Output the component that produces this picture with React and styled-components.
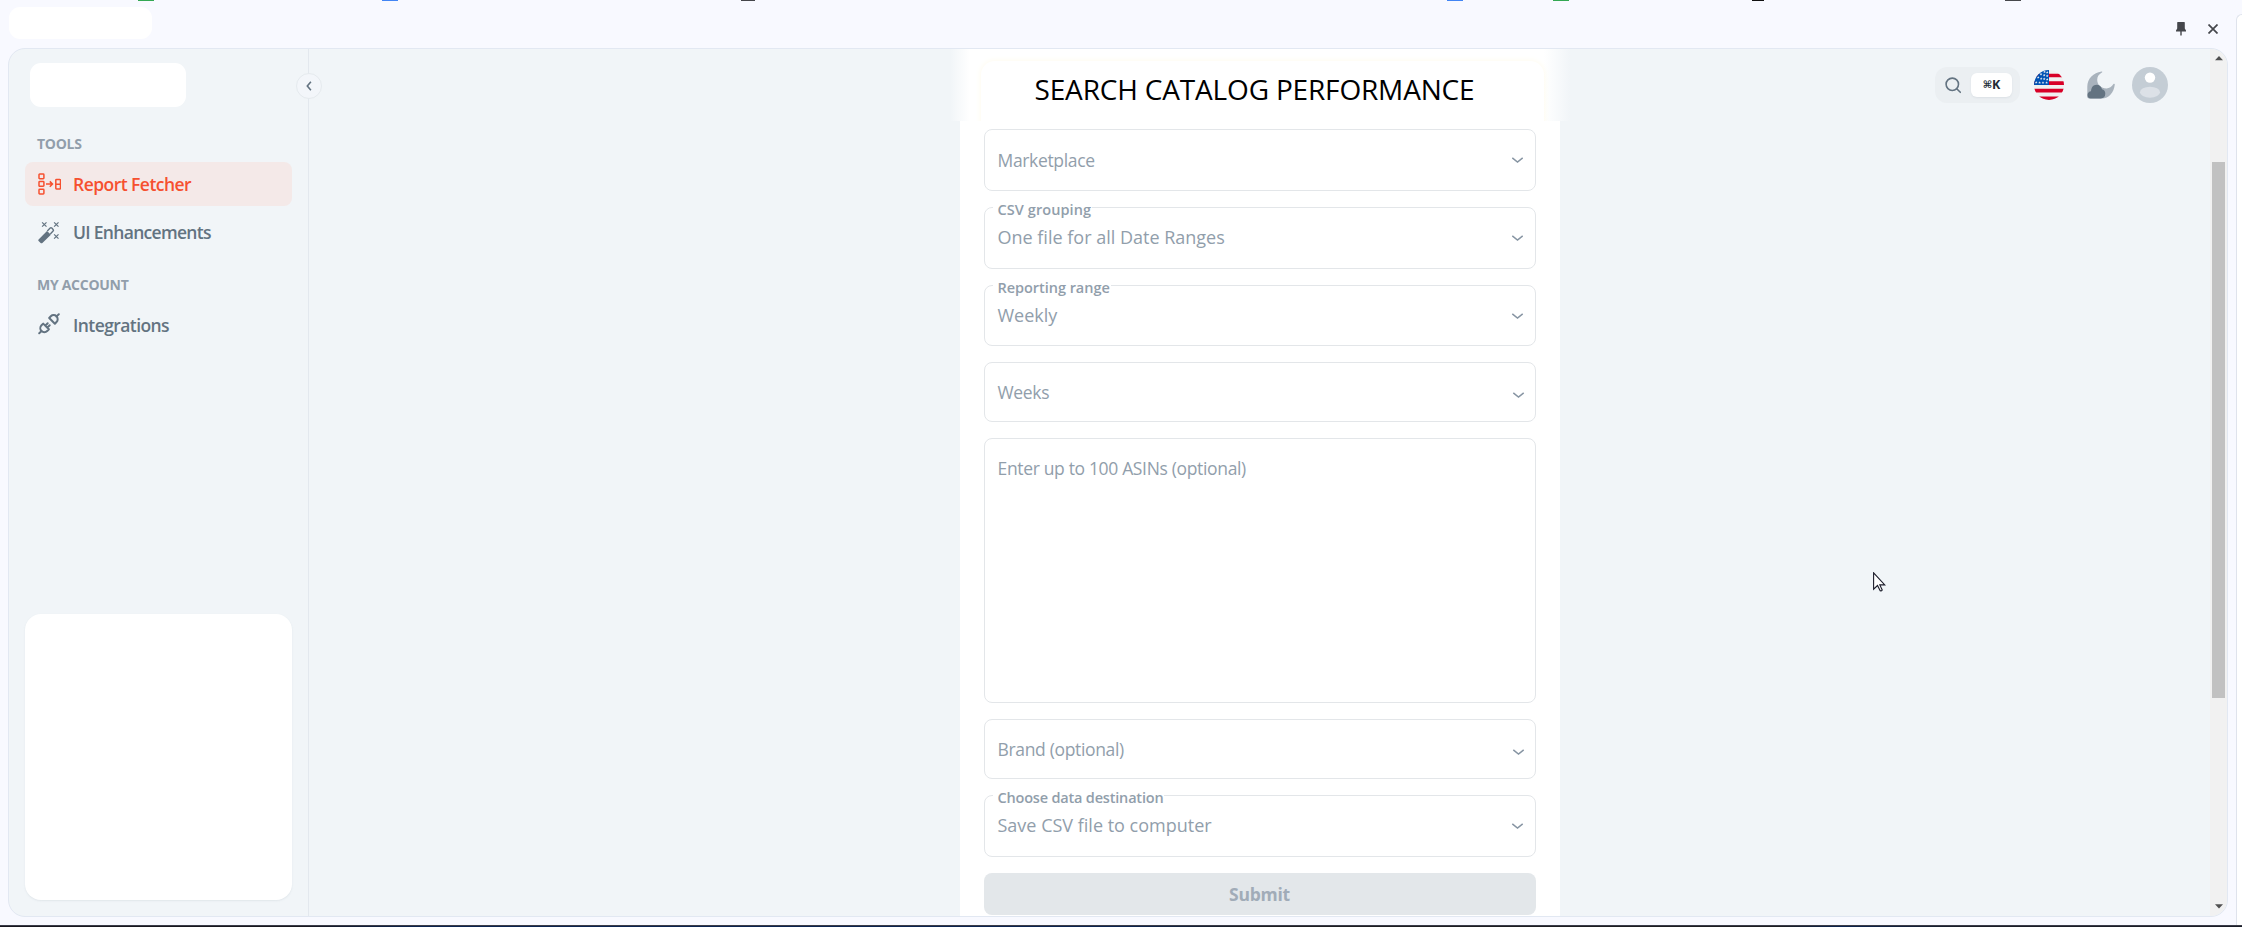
import React from 'react';
import styled, { createGlobalStyle } from 'styled-components';

const GlobalStyle = createGlobalStyle`
  *, *::before, *::after { box-sizing: border-box; }
  body {
    margin: 0;
    overflow: hidden;
    background: #f8f9ff;
    font-family: "Open Sans", "Noto Sans", sans-serif;
  }
`;

const Screen = styled.div`
  display: flex;
  flex-direction: column;
  width: 2242px;
  height: 927px;
  background: #f8f9ff;
`;

const TabStrip = styled.div`
  display: flex;
  flex: none;
  height: 1px;
`;

const TabEdge = styled.span`
  width: ${(p) => p.$width}px;
  margin-left: ${(p) => p.$gap}px;
  background: ${(p) => p.$color};
`;

const Workspace = styled.div`
  flex: 1;
  display: flex;
  min-height: 0;
`;

const SidePanel = styled.section`
  flex: 1;
  display: flex;
  flex-direction: column;
  padding: 0 8px;
`;

const PanelBar = styled.header`
  flex: none;
  display: flex;
  align-items: flex-start;
  justify-content: space-between;
  height: 47px;
  padding: 6px 10px 0 1px;
`;

const PanelTitle = styled.div`
  width: 143px;
  height: 32px;
  border-radius: 11px;
  background: #fff;
`;

const PanelActions = styled.div`
  display: flex;
  align-items: center;
  gap: 22px;
  padding-top: 15px;
`;

const NextPanel = styled.aside`
  width: 6px;
  margin-top: 13px;
  border: solid #dfe3ec;
  border-width: 1px 0 0 1px;
  border-radius: 9px 0 0 0;
  background: #fff;
`;

const Frame = styled.div`
  display: flex;
  height: 869px;
  border: 1px solid #e2e8f2;
  border-radius: 17px;
  background: #f1f5f8;
  overflow: hidden;
`;

const Sidebar = styled.nav`
  position: relative;
  display: flex;
  flex-direction: column;
  width: 300px;
  padding: 14px 16px 16px;
  border-right: 1px solid #e3e8ee;
  flex: none;
`;

const Logo = styled.div`
  width: 156px;
  height: 44px;
  margin: 0 0 6px 5px;
  border-radius: 11px;
  background: #fff;
`;

const CollapseButton = styled.button`
  position: absolute;
  z-index: 2;
  top: 24px;
  right: -14px;
  display: grid;
  place-items: center;
  width: 26px;
  height: 26px;
  padding: 0;
  border: 1px solid #e5eaee;
  border-radius: 50%;
  background: #f3f6fa;
  color: #637381;
`;

const SectionLabel = styled.h2`
  margin: 21px 0 8px 12px;
  color: #919eab;
  font-size: 14px;
  font-weight: 700;
  line-height: 20px;
  letter-spacing: -0.28px;
`;

const NavList = styled.div`
  display: flex;
  flex-direction: column;
  gap: 4px;
`;

const NavItem = styled.a`
  display: flex;
  align-items: center;
  gap: 12px;
  height: 44px;
  padding: 0 12px;
  border-radius: 8px;
  background: ${(p) => (p.$active ? '#f4e9e8' : 'transparent')};
  color: ${(p) => (p.$active ? '#f6502f' : '#637381')};
  font-size: 17.5px;
  font-weight: 600;
  letter-spacing: ${(p) => p.$tracking}px;
  white-space: nowrap;
`;

const PromoCard = styled.div`
  width: 267px;
  height: 286px;
  margin-top: auto;
  border-radius: 16px;
  background: #fff;
  box-shadow: 0 1px 2px rgba(145, 158, 171, 0.16);
`;

const Main = styled.main`
  flex: 1;
  display: grid;
  grid-template-columns: minmax(0, 1fr) 600px minmax(0, 1fr);
`;

const FormCard = styled.section`
  grid-column: 2;
  display: flex;
  flex-direction: column;
  height: 867px;
  background: #fff;
`;

const FormHeader = styled.div`
  flex: none;
  display: flex;
  height: 72px;
  margin: 0 -10px;
  padding: 12px 26px 0 31px;
  overflow: hidden;
  background: linear-gradient(90deg, #f1f5f8 0, #fff 20px, #fff calc(100% - 26px), #f1f5f8 100%);
`;

const Title = styled.h1`
  flex: 1;
  height: 74px;
  margin: 0;
  border-radius: 14px;
  box-shadow: 0 0 6px #fffaea;
  color: #000;
  font-size: 28px;
  font-weight: 400;
  line-height: 57px;
  text-indent: -15px;
  text-align: center;
  letter-spacing: -0.17px;
  white-space: nowrap;
`;

const Form = styled.form`
  display: flex;
  flex-direction: column;
  gap: 16px;
  padding: 8px 24px 0;
`;

const Select = styled.div`
  position: relative;
  display: flex;
  align-items: center;
  justify-content: space-between;
  height: ${(p) => p.$height}px;
  padding: 0 ${(p) => (p.$inset ? 10 : 11)}px 0 13px;
  border: 1px solid #e3e6e9;
  border-radius: 8px;
  color: #919eab;
`;

const Value = styled.span`
  padding-bottom: 2px;
  font-size: 18px;
  line-height: 24px;
`;

const Placeholder = styled.span`
  font-size: 17.5px;
  line-height: 24px;
  letter-spacing: -0.34px;
`;

const FloatingLabel = styled.label`
  position: absolute;
  top: -8px;
  left: 8px;
  padding: 0 1px 0 5px;
  background: #fff;
  font-size: 14.5px;
  font-weight: 600;
  line-height: 20px;
  letter-spacing: ${(p) => p.$tracking}px;
  white-space: nowrap;
`;

const Chevron = styled.svg`
  width: 13px;
  height: 8px;
  fill: none;
  stroke: #8795a3;
  stroke-width: 1.5;
  margin-top: ${(p) => p.$drop}px;
`;

const TextArea = styled.div`
  height: 265px;
  padding: 17px 13px;
  border: 1px solid #e3e6e9;
  border-radius: 8px;
  color: #919eab;
`;

const Submit = styled.button`
  height: 42px;
  padding: 0;
  border: 0;
  border-radius: 8px;
  background: #e3e7ea;
  color: #a1acb8;
  font: 700 17.5px/24px "Open Sans", "Noto Sans", sans-serif;
  letter-spacing: -0.25px;
`;

const Toolbar = styled.div`
  display: flex;
  align-items: center;
  justify-content: flex-end;
  height: 36px;
  margin: 18px 42px 0 0;
`;

const SearchBox = styled.div`
  display: flex;
  align-items: center;
  justify-content: space-between;
  width: 85px;
  height: 36px;
  padding: 0 8px 0 9px;
  border-radius: 12px;
  background: #ebeff2;
`;

const Shortcut = styled.kbd`
  display: flex;
  align-items: center;
  justify-content: center;
  width: 41px;
  height: 24px;
  border-radius: 6px;
  background: #fff;
  box-shadow: 0 1px 2px rgba(145, 158, 171, 0.16);
  color: #212b36;
  font: 700 12.5px/24px "Open Sans", sans-serif;
`;

const CommandSign = styled.span`
  font: 700 10px/24px "DejaVu Sans", sans-serif;
`;

const Flag = styled.svg`
  width: 30px;
  height: 30px;
  margin-left: 14px;
`;

const Moon = styled.svg`
  width: 28px;
  height: 28px;
  margin: 0 17px 0 23px;
`;

const Avatar = styled.svg`
  width: 36px;
  height: 36px;
`;

const ScrollTrack = styled.div`
  flex: none;
  display: flex;
  flex-direction: column;
  align-items: center;
  width: 17px;
  padding: 7px 0;
  background: #f1f1f1;
`;

const ScrollThumb = styled.div`
  width: 13px;
  height: 536px;
  margin: 101px 0 auto;
  background: #c1c1c1;
`;

const Arrow = styled.svg`
  width: 8px;
  height: 5px;
  flex: none;
  fill: #505050;
`;

const Taskbar = styled.footer`
  flex: none;
  height: 2px;
  border-top: 1px solid #3a3c48;
  background: linear-gradient(90deg, #17161f 0, #17161f 300px, #0b2350 420px, #0b2350 1130px, #1c1d22 1250px, #1c1d22 1780px, #0b2350 1840px, #1a1d28 1960px);
`;

const Pointer = styled.svg`
  position: absolute;
  left: 1873px;
  top: 572px;
  width: 13px;
  height: 20px;
`;

const tabs = [
  [138, 16, '#34a853'],
  [228, 16, '#4285f4'],
  [343, 14, '#45464a'],
  [692, 16, '#4285f4'],
  [90, 16, '#34a853'],
  [183, 12, '#111'],
  [241, 16, '#47484c'],
];

function FetcherIcon() {
  return (
    <svg width="24" height="24" viewBox="0 0 24 24" fill="none" stroke="currentColor" strokeWidth="1.5">
      <rect x="2" y="2" width="4.9" height="4.7" rx=".7" />
      <rect x="2" y="9.6" width="4.9" height="4.7" rx=".7" />
      <rect x="2" y="17.2" width="4.9" height="4.7" rx=".7" />
      <path d="M9 12.1h6.4M12.8 9.4l2.7 2.7-2.7 2.7" />
      <rect x="18.8" y="7.4" width="4.7" height="9.6" rx=".7" />
      <path d="M18.8 12.2h4.7" />
    </svg>
  );
}

function WandIcon() {
  return (
    <svg width="24" height="24" viewBox="0 0 24 24" fill="none" stroke="currentColor" strokeWidth="1.2">
      <path d="M1.6 19.4 10 11l3.9 3.7L5.4 23c-.5.4-1.3.4-1.8 0l-2-1.9a1.2 1.2 0 0 1 0-1.7Z" fill="currentColor" stroke="none" />
      <path d="m10.3 10.9 2.9-2.8c.5-.5 1.1-.5 1.6 0l1.3 1.3c.5.5.5 1.1 0 1.6l-2.8 2.9" strokeWidth="1.4" />
      <path d="m5.1 2.3 4.4 4.4m0-4.4L5.1 6.7M17.1 2.3l4.4 4.4m0-4.4-4.4 4.4M17.1 14.3l4.4 4.4m0-4.4-4.4 4.4" />
    </svg>
  );
}

function PlugIcon() {
  return (
    <svg width="24" height="24" viewBox="0 0 24 24" fill="none" stroke="currentColor" strokeWidth="2" strokeLinejoin="round" strokeLinecap="round">
      <path d="m12.2 5 5.7 5.7 1.6-1.7a4.03 4.03 0 0 0-5.7-5.7ZM19.3 3.6 21.800 1.200" />
      <path d="m6.200 10.600 5.700 5.700-1.700 1.700a4.030 4.030 0 0 1-5.700-5.700ZM4.700 17.900 2.200 20.300M8.500 12.500l2.200-2.200M10.500 14.500l2.200-2.200" />
    </svg>
  );
}

const stars = [
  [10.5, 1.8], [13.2, 2.4], [7, 4.2], [10.2, 5.2], [13.2, 6], [4.2, 7.3], [7.2, 8.6],
  [10.2, 9], [13.2, 9.4], [2.2, 12.3], [5.6, 12.6], [9, 12.6], [12.6, 12.6],
];

function SelectField({ label, tracking = 0, value, placeholder, height = 62, inset = false }) {
  return (
    <Select $height={height} $inset={inset}>
      {label && <FloatingLabel $tracking={tracking}>{label}</FloatingLabel>}
      {value ? <Value>{value}</Value> : <Placeholder>{placeholder}</Placeholder>}
      <Chevron viewBox="0 0 13 8" $drop={inset ? 5 : 0}>
        <path d="m1.300 1.900 5.200 4.100 5.200-4.100" />
      </Chevron>
    </Select>
  );
}

export default function App() {
  return (
    <Screen>
      <GlobalStyle />
      <TabStrip>
        {tabs.map(([gap, width, color], i) => (
          <TabEdge key={i} $gap={gap} $width={width} $color={color} />
        ))}
      </TabStrip>
      <Workspace>
        <SidePanel>
          <PanelBar>
            <PanelTitle />
            <PanelActions>
              <svg width="10" height="14" viewBox="0 0 10 14" fill="#45474c">
                <path d="M1.8 0h6.4c.4 0 .6.3.6.6V6.6L10 8.4v1H5.7V13l-.7.9-.7-.9V9.4H0v-1l1.2-1.8V.6c0-.3.2-.6.6-.6Z" />
              </svg>
              <svg width="10" height="10" viewBox="0 0 10 10" fill="none" stroke="#45474c" strokeWidth="1.7">
                <path d="m.5.5 9 9m0-9-9 9" />
              </svg>
            </PanelActions>
          </PanelBar>
          <Frame>
            <Sidebar>
              <Logo />
              <CollapseButton aria-label="Collapse">
                <svg width="6" height="10" viewBox="0 0 6 10" fill="none" stroke="currentColor" strokeWidth="1.6">
                  <path d="M4.9.7 1.3 5l3.6 4.3" />
                </svg>
              </CollapseButton>
              <SectionLabel>TOOLS</SectionLabel>
              <NavList>
                <NavItem $active $tracking={-0.54}><FetcherIcon />Report Fetcher</NavItem>
                <NavItem $tracking={-0.7}><WandIcon />UI Enhancements</NavItem>
              </NavList>
              <SectionLabel>MY ACCOUNT</SectionLabel>
              <NavList>
                <NavItem $tracking={-0.58}><PlugIcon />Integrations</NavItem>
              </NavList>
              <PromoCard />
            </Sidebar>
            <Main>
              <FormCard>
                <FormHeader>
                  <Title>SEARCH CATALOG PERFORMANCE</Title>
                </FormHeader>
                <Form>
                  <SelectField placeholder="Marketplace" />
                  <SelectField label="CSV grouping" tracking={0.08} value="One file for all Date Ranges" />
                  <SelectField label="Reporting range" tracking={-0.04} value="Weekly" height={61} />
                  <SelectField placeholder="Weeks" height={60} inset />
                  <TextArea><Placeholder>Enter up to 100 ASINs (optional)</Placeholder></TextArea>
                  <SelectField placeholder="Brand (optional)" height={60} inset />
                  <SelectField label="Choose data destination" tracking={-0.19} value="Save CSV file to computer" />
                  <Submit type="button">Submit</Submit>
                </Form>
              </FormCard>
              <Toolbar>
                <SearchBox>
                  <svg width="18" height="18" viewBox="0 0 18 18" fill="none" stroke="#637381" strokeWidth="1.6" strokeLinecap="round">
                    <circle cx="8.3" cy="8.3" r="6.2" />
                    <path d="m13 13 3.3 3.3" />
                  </svg>
                  <Shortcut><CommandSign>⌘</CommandSign>K</Shortcut>
                </SearchBox>
                <Flag viewBox="0 0 30 30">
                  <clipPath id="disc"><circle cx="15" cy="15" r="15" /></clipPath>
                  <g clipPath="url(#disc)">
                    <path fill="#f0f0f0" d="M0 0h30v30H0z" />
                    <path fill="#d80027" d="M0 3.7h30v3.6H0zM0 11.3h30V15H0zM0 18.8h30v3.7H0zM0 26.4h30V30H0z" />
                    <path fill="#0052b4" d="M0 0h15v15H0z" />
                    {stars.map(([x, y], i) => (
                      <path key={i} fill="#f0f0f0" transform={`translate(${x} ${y})`} d="M0-1.4.4-.4h1L.6.2.9 1.2 0 .6l-.9.6.3-1-.8-.6h1z" />
                    ))}
                  </g>
                </Flag>
                <Moon viewBox="0 0 28 28">
                  <path fill="#a9b3bd" d="M14.5.4C6.5 1.5.3 7.5.3 15.5V26c0 1 1.5 1.500 3 1.500h11.500C22 27.300 26.800 22 27.800 13.500c0-.8-.8-1-1.300-.4-1.700 2.700-4.200 4.300-7 4.300-5.500 0-9.300-3.700-9.300-8.600 0-3.200 1.700-5.500 4.700-7.200.7-.5.400-1.300-.4-1.200Z" />
                  <path fill="#637381" d="M3.700 27.500A3.700 3.700 0 0 1 .5 23.900c0-2 1.500-3.400 3.500-3.600.2-3.700 2.300-6.500 5.500-6.500 2.900 0 5 1.800 5.500 4.500 2.100.4 3.300 2 3.300 4.500 0 2.800-1.800 4.700-4.500 4.700Z" />
                </Moon>
                <Avatar viewBox="0 0 36 36">
                  <circle cx="18" cy="18" r="18" fill="#c4cdd5" />
                  <circle cx="18" cy="10.6" r="5.2" fill="#fff" />
                  <ellipse cx="18" cy="25.2" rx="10" ry="5.5" fill="#dce1e7" />
                </Avatar>
              </Toolbar>
            </Main>
            <ScrollTrack>
              <Arrow viewBox="0 0 8 5"><path d="M4 0 8 4.3H0z" /></Arrow>
              <ScrollThumb />
              <Arrow viewBox="0 0 8 5"><path d="M4 4.6 8 .3H0z" /></Arrow>
            </ScrollTrack>
          </Frame>
        </SidePanel>
        <NextPanel />
      </Workspace>
      <Taskbar />
      <Pointer viewBox="0 0 13 20">
        <path d="M.6.8v16.4l3.9-3.7 2.7 5.3c.8.3 1.9-.2 2-.9l-2.4-5h5Z" fill="#fff" stroke="#1c1d2b" strokeWidth="1.1" />
      </Pointer>
    </Screen>
  );
}
